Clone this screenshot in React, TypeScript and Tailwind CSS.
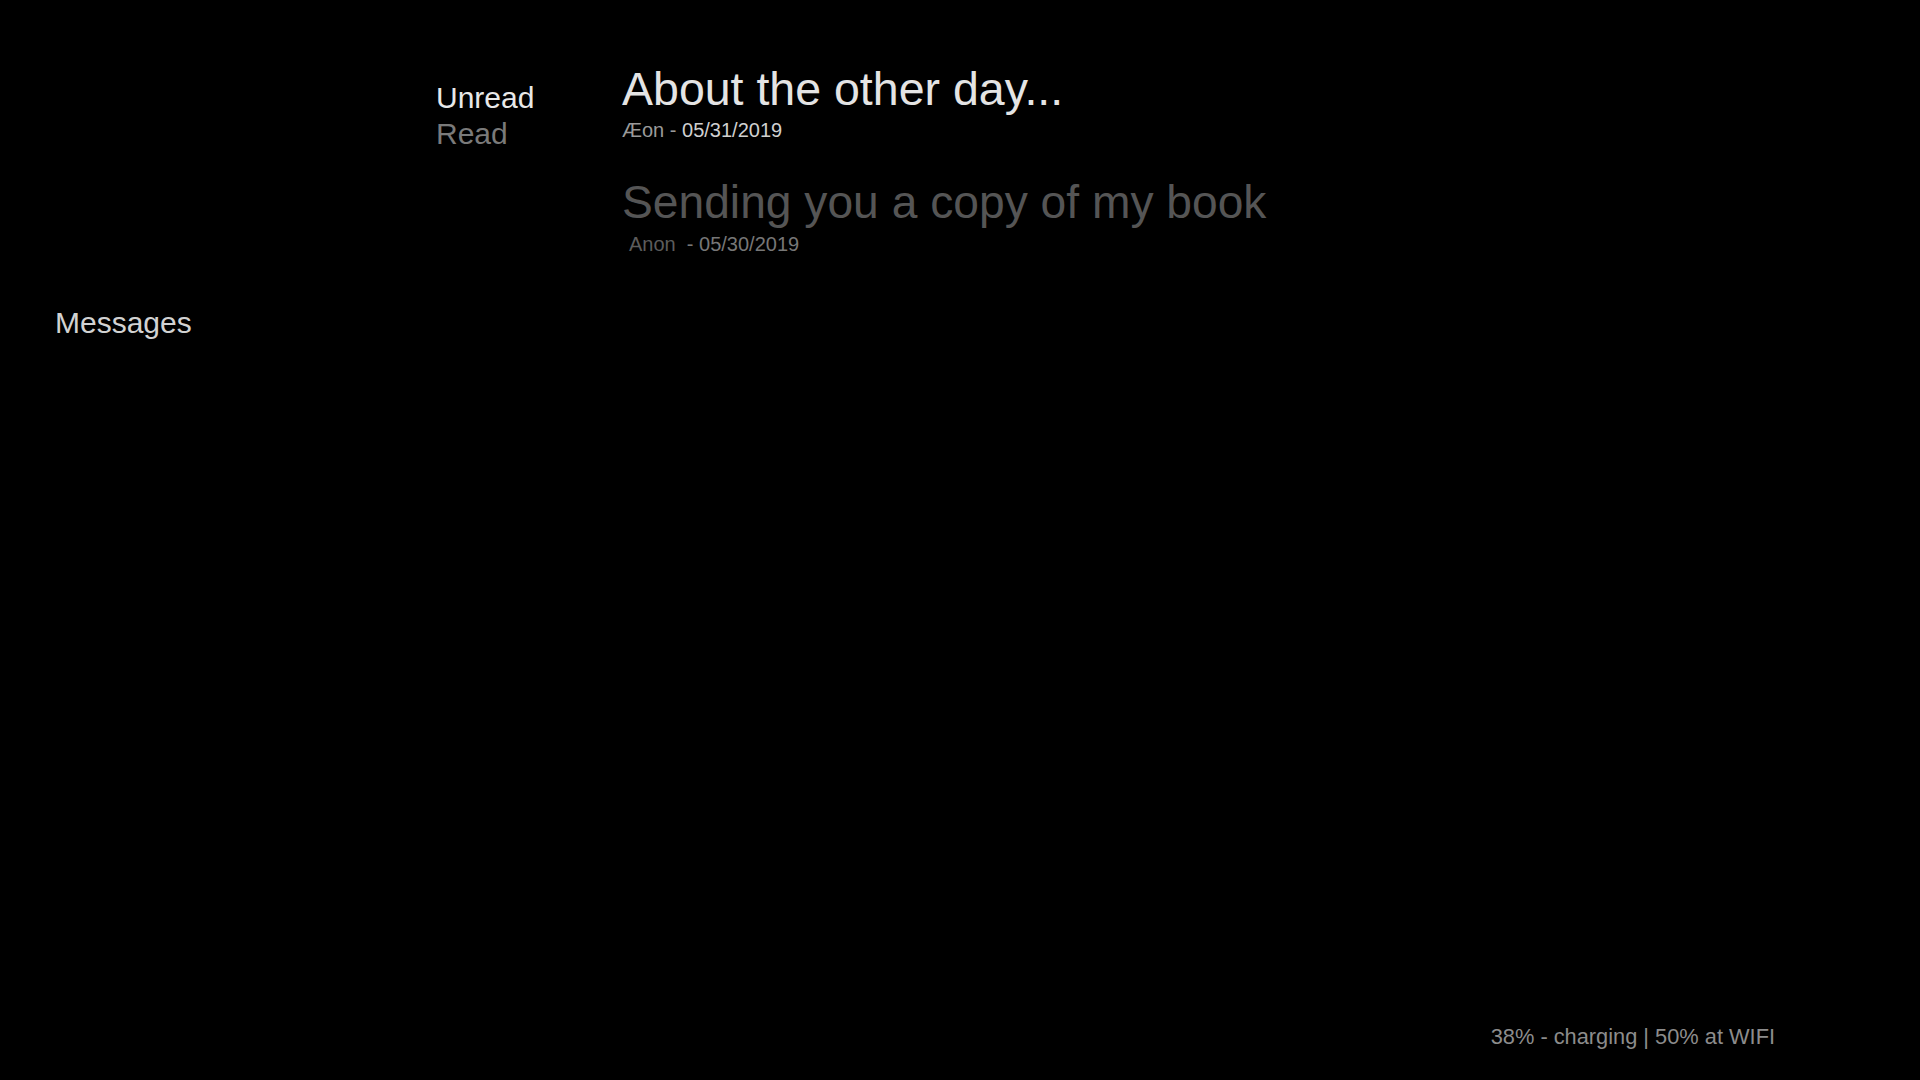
import React from "react";

export default function App() {
  return (
    <div
      className="w-[1920px] h-[1080px] bg-black flex flex-col overflow-hidden"
      style={{ fontFamily: '"Liberation Sans", Arial, sans-serif' }}
    >
      <div className="flex flex-row flex-1">
        <aside className="w-[436px] pl-[55px] pt-[305px]">
          <div className="text-[30px] leading-[36px] text-[#d2d2d2]">Messages</div>
        </aside>
        <nav className="w-[186px] pt-[80px] flex flex-col">
          <div className="text-[30px] leading-[36px] text-[#e8e8e8]">Unread</div>
          <div className="text-[30px] leading-[36px] text-[#7a7a7a]">Read</div>
        </nav>
        <main className="flex-1 pt-[63px] flex flex-col gap-[34px]">
          <div className="flex flex-col gap-[3px]">
            <div className="text-[46.5px] leading-[52px] text-[#e4e4e4]">About the other day...</div>
            <div className="text-[20px] leading-[24px]">
              <span className="text-[#9a9a9a]">Æon - </span>
              <span className="text-[#d0d0d0]">05/31/2019</span>
            </div>
          </div>
          <div className="flex flex-col gap-[4px]">
            <div className="text-[46.2px] leading-[52px] text-[#555555]">Sending you a copy of my book</div>
            <div className="text-[20px] leading-[24px] pl-[7px] whitespace-pre">
              <span className="text-[#5c5c5c]">Anon </span>
              <span className="text-[#777777]"> - 05/30/2019</span>
            </div>
          </div>
        </main>
      </div>
      <footer className="flex justify-end pr-[145px] pb-[30px]">
        <div className="text-[21.8px] leading-[26px] text-[#8c8c8c]">38% - charging | 50% at WIFI</div>
      </footer>
    </div>
  );
}
